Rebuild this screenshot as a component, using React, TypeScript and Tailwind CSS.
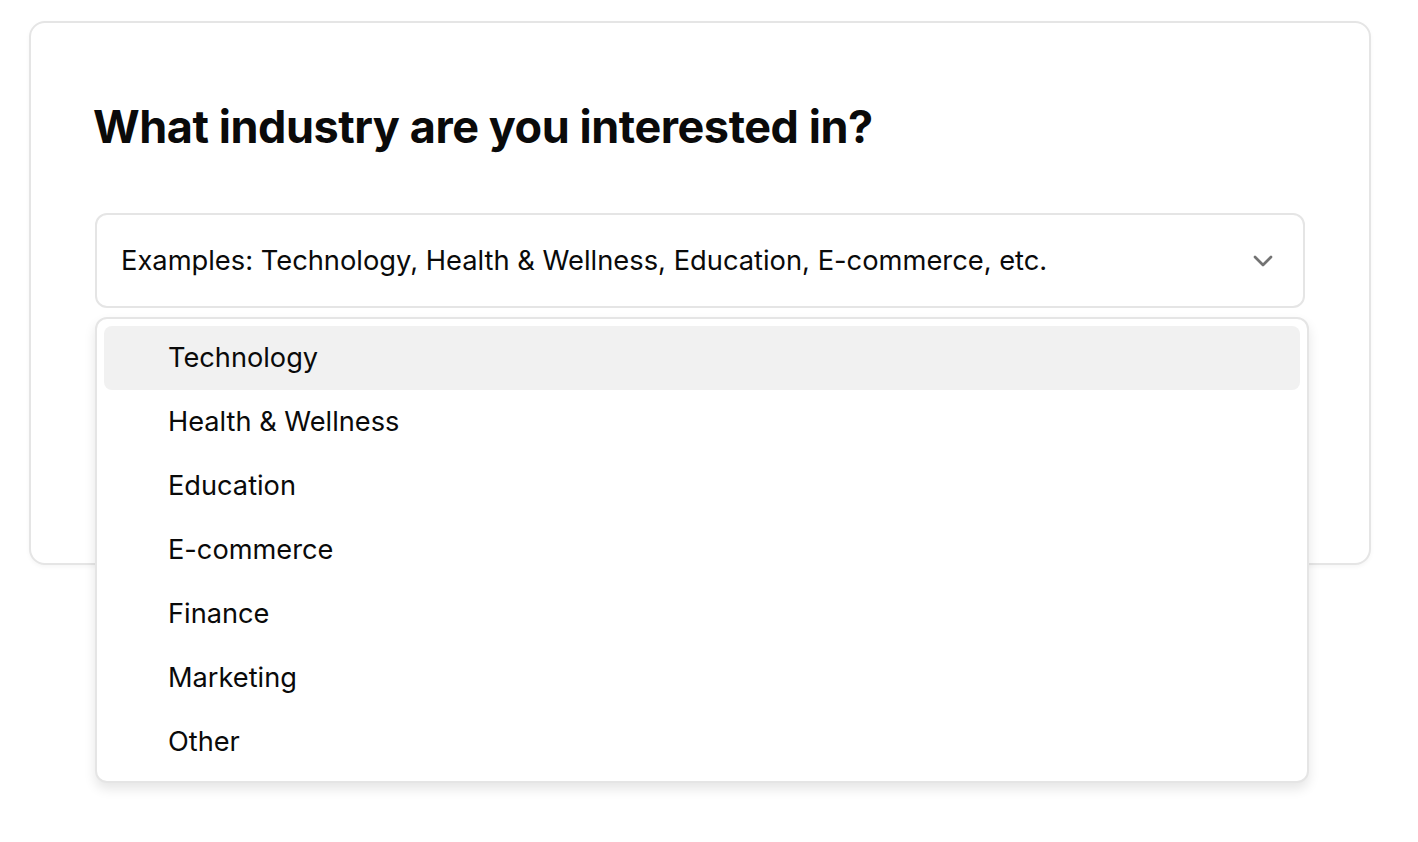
import React, { useState } from "react";
import { ChevronDown } from "lucide-react";

const industries = [
  "Technology",
  "Health & Wellness",
  "Education",
  "E-commerce",
  "Finance",
  "Marketing",
  "Other",
];

export default function App() {
  const [active, setActive] = useState(0);

  return (
    <div
      className="min-h-[842px] bg-white pt-[21px] pl-[29px] text-[#0a0a0a]"
      style={{ fontFamily: "Inter, 'Noto Sans', sans-serif" }}
    >
      <div className="w-[1342px] h-[544px] rounded-[16px] border-2 border-[#e5e5e5] bg-white px-[64px] pt-[78px] shadow-[0_2px_4px_rgba(0,0,0,0.04)]">
        <h1 className="-ml-[2px] text-[45px] leading-[52px] font-bold tracking-[-0.01em]">
          What industry are you interested in?
        </h1>

        <div className="relative mt-[60px]">
          <button
            type="button"
            className="flex h-[95px] w-[1210px] items-center justify-between rounded-[12px] border-2 border-[#e5e5e5] bg-white pl-[24px] pr-[24px] text-left"
          >
            <span className="text-[27.3px] leading-[34px]">
              Examples: Technology, Health &amp; Wellness, Education, E-commerce, etc.
            </span>
            <ChevronDown className="size-[32px] text-[#737373]" strokeWidth={2} />
          </button>

          <div className="absolute left-0 top-[104px] z-10 w-[1214px] rounded-[12px] border-2 border-[#e5e5e5] bg-white p-[7px] shadow-[0_6px_12px_rgba(0,0,0,0.1)]">
            {industries.map((item, i) => (
              <div
                key={item}
                onMouseEnter={() => setActive(i)}
                className={`flex h-[64px] items-center rounded-[8px] pl-[64px] text-[27.2px] ${
                  i === active ? "bg-[#f1f1f1]" : ""
                }`}
              >
                {item}
              </div>
            ))}
          </div>
        </div>
      </div>
    </div>
  );
}
